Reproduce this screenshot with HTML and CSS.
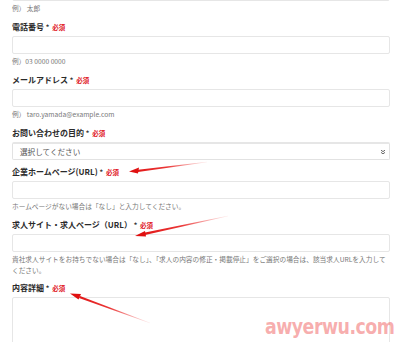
FILE: index.html
```html
<!DOCTYPE html>
<html lang="ja">
<head>
<meta charset="utf-8">
<link rel="stylesheet" href="styles.css">
</head>
<body>
<div class="page">
  <form class="form">
    <div class="group">
      <input class="control" type="text">
      <p class="help">例） 太郎</p>
    </div>
    <div class="group">
      <label class="label">電話番号 <span class="ast">*</span> <span class="req">必須</span></label>
      <input class="control" type="text">
      <p class="help">例）03 0000 0000</p>
    </div>
    <div class="group">
      <label class="label">メールアドレス <span class="ast">*</span> <span class="req">必須</span></label>
      <input class="control" type="text">
      <p class="help">例） taro.yamada@example.com</p>
    </div>
    <div class="group">
      <label class="label">お問い合わせの目的 <span class="ast">*</span> <span class="req">必須</span></label>
      <div class="select">
        <span class="select-text">選択してください</span>
        <svg class="chev" width="6" height="6" viewBox="0 0 6 6"><path d="M1 1.2 L3 2.6 L5 1.2 M1 3.4 L3 4.8 L5 3.4" fill="none" stroke="#555" stroke-width="0.9"/></svg>
      </div>
    </div>
    <div class="group">
      <label class="label">企業ホームページ(URL) <span class="ast">*</span> <span class="req">必須</span></label>
      <input class="control" type="text">
      <p class="help">ホームページがない場合は「なし」と入力してください。</p>
    </div>
    <div class="group">
      <label class="label">求人サイト・求人ページ（URL） <span class="ast">*</span> <span class="req">必須</span></label>
      <input class="control" type="text">
      <p class="help two">貴社求人サイトをお持ちでない場合は「なし」、「求人の内容の修正・掲載停止」をご選択の場合は、該当求人URLを入力してください。</p>
    </div>
    <div class="group">
      <label class="label">内容詳細 <span class="ast">*</span> <span class="req">必須</span></label>
      <textarea class="control area"></textarea>
    </div>
  </form>

  <svg class="arrows" width="400" height="342" viewBox="0 0 400 342">
    <defs>
      <linearGradient id="g1" gradientUnits="userSpaceOnUse" x1="207" y1="162" x2="128" y2="172">
        <stop offset="0" stop-color="#f05050" stop-opacity="0.1"/>
        <stop offset="0.5" stop-color="#e82020" stop-opacity="0.9"/>
        <stop offset="1" stop-color="#e01010"/>
      </linearGradient>
      <linearGradient id="g2" gradientUnits="userSpaceOnUse" x1="228" y1="216" x2="135" y2="236">
        <stop offset="0" stop-color="#f05050" stop-opacity="0.1"/>
        <stop offset="0.5" stop-color="#e82020" stop-opacity="0.9"/>
        <stop offset="1" stop-color="#e01010"/>
      </linearGradient>
      <linearGradient id="g3" gradientUnits="userSpaceOnUse" x1="150" y1="323" x2="70" y2="294">
        <stop offset="0" stop-color="#f05050" stop-opacity="0.1"/>
        <stop offset="0.5" stop-color="#e82020" stop-opacity="0.9"/>
        <stop offset="1" stop-color="#e01010"/>
      </linearGradient>
    </defs>
    <polygon points="207,161.7 138,169.8 138,172 207,162.3" fill="url(#g1)"/>
    <polygon points="129,171.5 139,167.6 138,173.6" fill="#e01010"/>
    <polygon points="228,215.7 145,232.6 145,235 228,216.3" fill="url(#g2)"/>
    <polygon points="135,236 145,231 146,236.6" fill="#e01010"/>
    <polygon points="150,322.7 80,296 79,298 150,323.3" fill="url(#g3)"/>
    <polygon points="70,293.5 81,294 78.5,299.5" fill="#e01010"/>
  </svg>

  <div class="watermark">awyerwu.com</div>
</div>
</body>
</html>
```
FILE: styles.css
```css
* { box-sizing: border-box; }
html, body {
  margin: 0;
  padding: 0;
  background: #ffffff;
}
body {
  font-family: "Noto Sans CJK JP", "Noto Sans", sans-serif;
  color: #333;
  overflow: hidden;
}
.page {
  position: relative;
  width: 400px;
  height: 342px;
  overflow: hidden;
}
.form {
  margin: -17px 10px 0 12px;
  display: flex;
  flex-direction: column;
}
.group {
  display: flex;
  flex-direction: column;
  margin-bottom: 7px;
}
.label {
  display: block;
  height: 10px;
  line-height: 9px;
  font-size: 8px;
  font-weight: 700;
  color: #2a2a2a;
  margin-bottom: 4px;
  white-space: nowrap;
}
.ast {
  font-size: 7px;
  color: #333;
}
.req {
  font-size: 6.5px;
  font-weight: 700;
  color: #e0141e;
  margin-left: 1px;
}
.control {
  display: block;
  width: 378px;
  height: 18px;
  margin: 0;
  padding: 0 6px;
  border: 1px solid #e6e6e6;
  border-radius: 2px;
  background: #fff;
  font: inherit;
  outline: none;
  appearance: none;
}
.area {
  height: 60px;
  resize: none;
}
.select {
  width: 378px;
  height: 18px;
  border: 1px solid #e2e2e2;
  border-top: 2px solid #e6e6e6;
  border-radius: 2px;
  background: #fff;
  display: flex;
  align-items: center;
  justify-content: space-between;
  padding: 0 3px 0 7px;
}
.select-text {
  font-size: 7.6px;
  color: #555;
  line-height: 10px;
}
.chev {
  display: block;
}
.help {
  margin: 2px 0 2px;
  font-size: 6.7px;
  line-height: 10px;
  color: #777;
}
.help.two {
  line-height: 11px;
  margin-bottom: 0;
}
.arrows {
  position: absolute;
  left: 0;
  top: 0;
  pointer-events: none;
}
.watermark {
  position: absolute;
  left: 265px;
  top: 314px;
  font-family: "DejaVu Sans Condensed", "DejaVu Sans", sans-serif;
  font-weight: 700;
  font-size: 22px;
  letter-spacing: -0.6px;
  color: rgba(242, 120, 120, 0.6);
  line-height: 26px;
  transform: scaleX(0.88);
  transform-origin: left top;
}
```
